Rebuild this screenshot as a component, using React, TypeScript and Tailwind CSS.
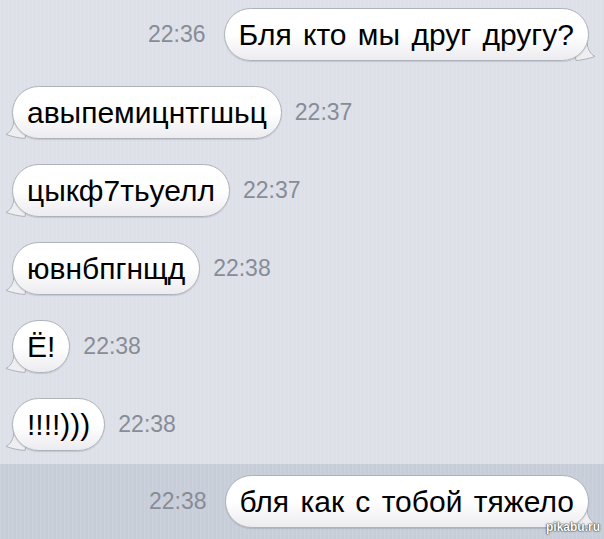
import React from "react";

interface Msg {
    text: string;
    time: string;
    out?: boolean;
}

const messages: Msg[] = [
    { text: "Бля кто мы друг другу?", time: "22:36", out: true },
    { text: "авыпемицнтгшьц", time: "22:37" },
    { text: "цыкф7тьуелл", time: "22:37" },
    { text: "ювнбпгнщд", time: "22:38" },
    { text: "Ё!", time: "22:38" },
    { text: "!!!!)))", time: "22:38" },
];

const last: Msg = { text: "бля как с тобой тяжело", time: "22:38", out: true };

const Tail = ({ out }: { out?: boolean }) => (
    <svg
        width="30"
        height="24"
        viewBox="0 0 30 24"
        className={out ? "absolute -right-[7px] -bottom-[1px] -scale-x-100" : "absolute -left-[7px] -bottom-[1px]"}
    >
        <path
            d="M9 1 C9 10 7 15 1 18.5 C7 20.5 13 22 20 22.5 L24 2 Z"
            fill="#efeff2"
            stroke="#aeb2ba"
            strokeWidth="1"
        />
    </svg>
);

const Bubble = ({ msg }: { msg: Msg }) => (
    <div className="relative">
        <Tail out={msg.out} />
        <div className="relative h-[53px] flex items-center px-[14px] rounded-[27px] border border-[#aeb2ba] bg-gradient-to-b from-white via-white to-[#ececf0] shadow-[0_1px_1px_rgba(0,0,0,0.12)]">
            <span className="text-[30px] leading-none text-black whitespace-nowrap [word-spacing:3px]">{msg.text}</span>
        </div>
    </div>
);

const Row = ({ msg }: { msg: Msg }) => {
    const time = <span className="text-[23px] text-[#878c96] leading-none">{msg.time}</span>;
    return msg.out ? (
        <div className="flex items-center justify-end gap-[18px] pr-[15px]">
            {time}
            <Bubble msg={msg} />
        </div>
    ) : (
        <div className="flex items-center gap-[13px] pl-[12px]">
            <Bubble msg={msg} />
            {time}
        </div>
    );
};

export default function App() {
    return (
        <div className="relative w-[604px] h-[539px] overflow-hidden flex flex-col bg-[#dde0e8] bg-[repeating-linear-gradient(90deg,rgba(255,255,255,0.10)_0px,rgba(255,255,255,0.10)_1px,transparent_1px,transparent_4px)] font-['Liberation_Sans',Arial,sans-serif]">
            <div className="flex flex-col gap-[25px] pt-[8px]">
                {messages.map((m, i) => (
                    <Row key={i} msg={m} />
                ))}
            </div>
            <div className="mt-[13px] pt-[11px] flex-1 bg-[#c8ced9] bg-[repeating-linear-gradient(90deg,rgba(255,255,255,0.08)_0px,rgba(255,255,255,0.08)_1px,transparent_1px,transparent_4px)]">
                <Row msg={last} />
            </div>
            <span className="absolute right-[4px] bottom-[6px] text-[12px] font-bold text-white leading-none [text-shadow:0_0_2px_#333,0_0_1px_#000]">
                pikabu.ru
            </span>
        </div>
    );
}
